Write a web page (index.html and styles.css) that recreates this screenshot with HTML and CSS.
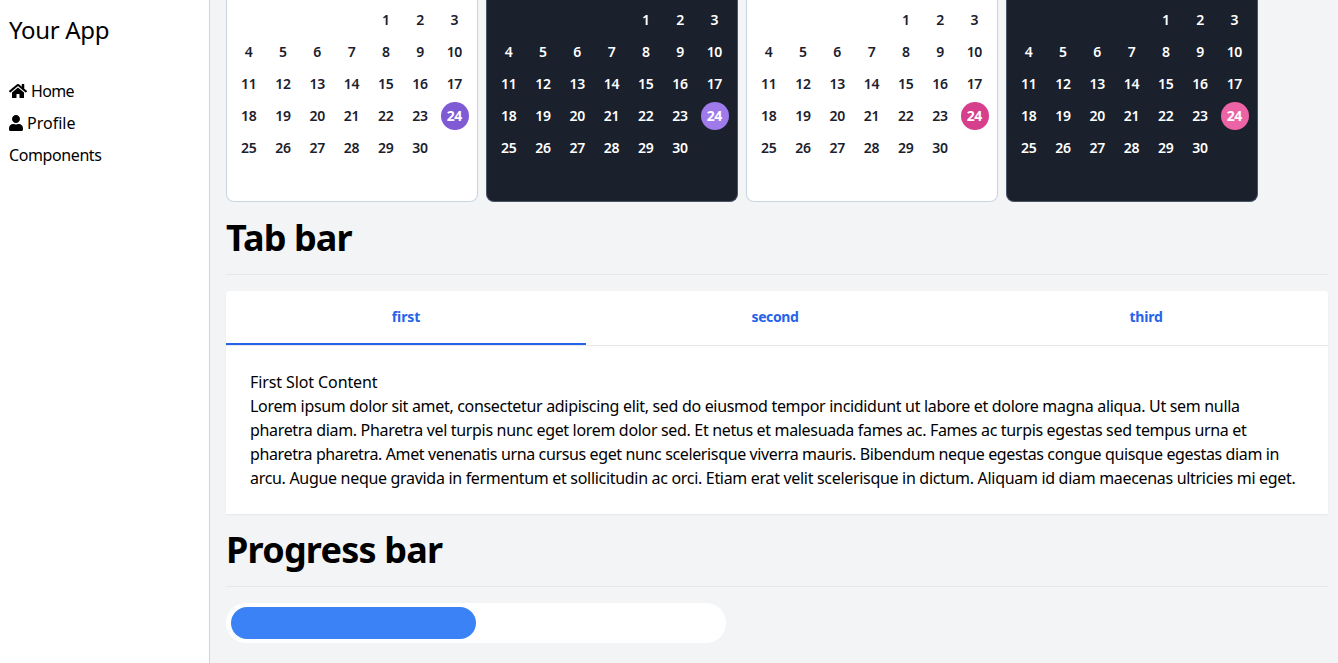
FILE: index.html
```html
<!DOCTYPE html>
<html lang="en">
<head>
<meta charset="utf-8">
<title>Your App</title>
<link rel="stylesheet" href="styles.css">
</head>
<body>
<aside class="sidebar">
  <div class="brand"><span>Your App</span></div>
  <nav class="nav">
    <a class="nav-item"><svg class="icon-home" viewBox="0 0 576 512"><path d="M280.37 148.26L96 300.11V464a16 16 0 0 0 16 16l112.06-.29a16 16 0 0 0 15.92-16V368a16 16 0 0 1 16-16h64a16 16 0 0 1 16 16v95.64a16 16 0 0 0 16 16.05L464 480a16 16 0 0 0 16-16V300L295.67 148.26a12.19 12.19 0 0 0-15.3 0zM571.6 251.47L488 182.56V44.05a12 12 0 0 0-12-12h-56a12 12 0 0 0-12 12v72.61L318.47 43a48 48 0 0 0-61 0L4.34 251.47a12 12 0 0 0-1.6 16.9l25.5 31A12 12 0 0 0 45.15 301l235.22-193.74a12.19 12.19 0 0 1 15.3 0L530.9 301a12 12 0 0 0 16.9-1.6l25.5-31a12 12 0 0 0-1.7-16.93z"/></svg><span class="t-home">Home</span></a>
    <a class="nav-item"><svg class="icon-user" viewBox="0 0 448 512"><path d="M224 256c70.7 0 128-57.3 128-128S294.7 0 224 0 96 57.3 96 128s57.3 128 128 128zm89.6 32h-16.7c-22.2 10.2-46.9 16-72.9 16s-50.6-5.8-72.9-16h-16.7C60.2 288 0 348.2 0 422.4V464c0 26.5 21.5 48 48 48h352c26.5 0 48-21.5 48-48v-41.6c0-74.2-60.2-134.4-134.4-134.4z"/></svg><span class="t-profile">Profile</span></a>
    <a class="nav-item"><span class="t-components">Components</span></a>
  </nav>
</aside>
<main class="main">
  <section class="calendars">
    <div class="calendar light purple"></div>
    <div class="calendar dark purple"></div>
    <div class="calendar light pink"></div>
    <div class="calendar dark pink"></div>
  </section>
  <h1 class="heading h-tab"><span>Tab bar</span></h1>
  <section class="card">
    <div class="tabs">
      <div class="tab active"><span>first</span></div>
      <div class="tab second"><span>second</span></div>
      <div class="tab third"><span>third</span></div>
    </div>
    <div class="content">
      <div class="l0">First Slot Content</div>
      <div class="l1">Lorem ipsum dolor sit amet, consectetur adipiscing elit, sed do eiusmod tempor incididunt ut labore et dolore magna aliqua. Ut sem nulla</div>
      <div class="l2">pharetra diam. Pharetra vel turpis nunc eget lorem dolor sed. Et netus et malesuada fames ac. Fames ac turpis egestas sed tempus urna et</div>
      <div class="l3">pharetra pharetra. Amet venenatis urna cursus eget nunc scelerisque viverra mauris. Bibendum neque egestas congue quisque egestas diam in</div>
      <div class="l4">arcu. Augue neque gravida in fermentum et sollicitudin ac orci. Etiam erat velit scelerisque in dictum. Aliquam id diam maecenas ultricies mi eget.</div>
    </div>
  </section>
  <h1 class="heading h-progress"><span>Progress bar</span></h1>
  <div class="progress"><div class="progress-fill"></div></div>
</main>
<script src="calendar.js"></script>
</body>
</html>
```

FILE: styles.css
```css
* { box-sizing: border-box; }
body {
  margin: 0;
  height: 663px;
  overflow: hidden;
  display: flex;
  background: #f3f4f6;
  color: #000;
  font: 16px/24px "Noto Sans", "Open Sans", sans-serif;
}
.sidebar {
  width: 210px;
  flex: none;
  padding: 12px 9px;
  background: #fff;
  border-right: 1px solid #d1d5db;
}
.brand { font-size: 24px; line-height: 36px; letter-spacing: -0.33px; }
.nav { margin-top: 27px; }
.nav-item {
  display: flex;
  align-items: center;
  gap: 4px;
  height: 32px;
  letter-spacing: -0.4px;
}
.t-home { letter-spacing: -0.65px; }
.t-profile { letter-spacing: 0; }
.icon-home { width: 18px; height: 16px; }
.icon-user { width: 14px; height: 16px; }
.main { flex: 1; min-width: 0; padding: 0 10px 0 16px; }
.calendars { display: flex; gap: 8px; }
.calendar {
  width: 252px;
  height: 202px;
  padding: 4px 5px 5px;
  border: 1px solid #cbd5e0;
  border-top: 0;
  border-radius: 0 0 8px 8px;
  display: grid;
  grid-template-columns: repeat(7, 1fr);
  grid-auto-rows: 32px;
  font-size: 14px;
  font-weight: 600;
}
.light { background: #fff; color: #1a202c; }
.dark { background: #1a202c; color: #fff; border-color: #4a5568; }
.day { display: flex; align-items: center; justify-content: center; padding-right: 1px; letter-spacing: -0.3px; }
.today {
  width: 28px;
  height: 28px;
  place-self: center;
  border-radius: 50%;
  color: #fff;
  font-weight: 700;
}
.light.purple .today { background: #805ad5; }
.dark.purple .today { background: #9f7aea; }
.light.pink .today { background: #d53f8c; }
.dark.pink .today { background: #ed64a6; }
.heading {
  margin: 0 0 16px;
  height: 73px;
  padding-top: 9px;
  border-bottom: 1px solid #e5e7eb;
  font-size: 36px;
  line-height: 54px;
  font-weight: 700;
}
.h-tab { letter-spacing: -0.9px; }
.h-progress { letter-spacing: -0.78px; }
.card {
  height: 223px;
  background: #fff;
  border-radius: 4px 4px 0 0;
  box-shadow: 0 1px 2px rgba(0, 0, 0, 0.06);
}
.tabs {
  display: flex;
  height: 55px;
  border-bottom: 1px solid #e5e7eb;
}
.tab {
  display: flex;
  justify-content: center;
  padding-top: 14px;
  color: #2563eb;
  font-size: 14px;
  font-weight: 700;
  letter-spacing: -0.4px;
}
.active { width: 360px; border-bottom: 2px solid #2563eb; letter-spacing: -0.05px; }
.second { width: 378px; }
.third { width: 364px; letter-spacing: -0.2px; }
.content { padding: 24px; white-space: nowrap; }
.content div { width: max-content; }
.l0 { letter-spacing: -0.1px; }
.l1 { letter-spacing: -0.32px; }
.l2 { letter-spacing: -0.33px; }
.l3 { letter-spacing: -0.37px; }
.l4 { letter-spacing: -0.31px; }
.progress {
  width: 500px;
  height: 40px;
  padding: 4px 5px;
  border-radius: 20px;
  background: #fff;
}
.progress-fill {
  width: 245px;
  height: 32px;
  border-radius: 16px;
  background: #3b82f6;
}
```

FILE: calendar.js
```js
// Fill each calendar with a 30-day month that begins on the fifth column.
document.querySelectorAll('.calendar').forEach(function (calendar) {
  for (let day = 1; day <= 30; day++) {
    const cell = document.createElement('div');
    cell.className = day === 24 ? 'day today' : 'day';
    cell.textContent = day;
    if (day === 1) cell.style.gridColumnStart = 5;
    calendar.appendChild(cell);
  }
});
```
